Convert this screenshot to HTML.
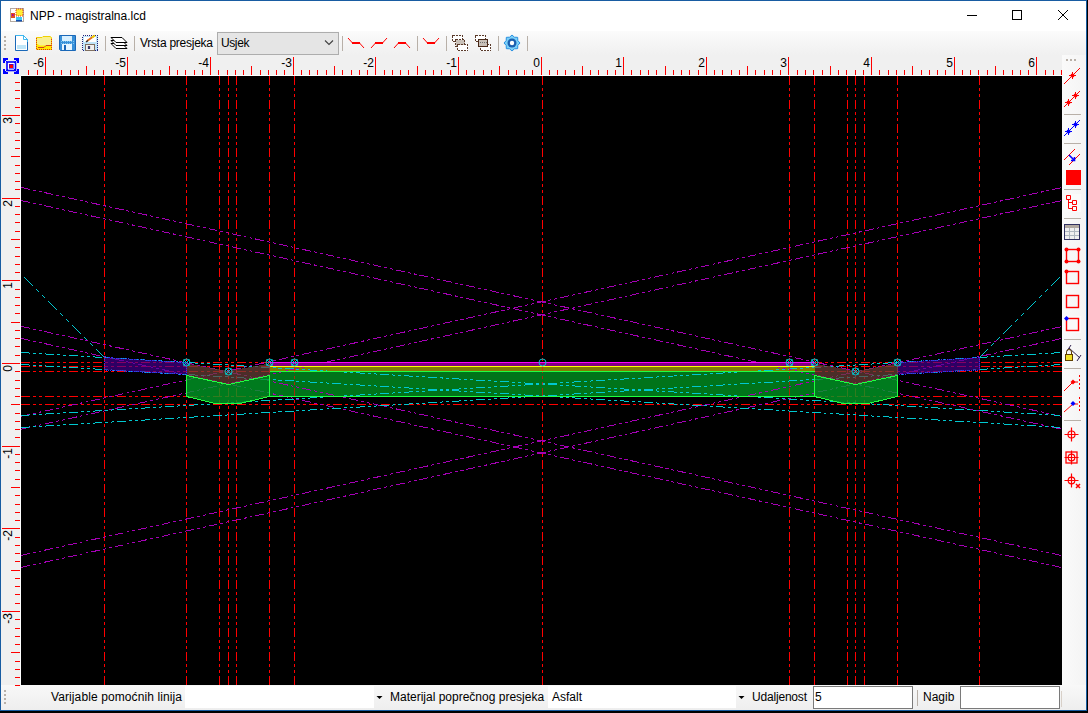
<!DOCTYPE html>
<html><head><meta charset="utf-8"><style>
html,body{margin:0;padding:0;background:#000;width:1088px;height:713px;overflow:hidden;font-family:"Liberation Sans",sans-serif;}
#win{position:absolute;left:0;top:0;width:1085px;height:709px;border:1px solid #185ca2;background:#f0f0f0;overflow:hidden}
.abs{position:absolute}
.t{position:absolute;font-size:12px;color:#000;white-space:nowrap;line-height:14px}
</style></head><body>
<div id="win">
 <div class="abs" style="left:0;top:0;width:1085px;height:30px;background:#fff"></div>
 <div class="abs" style="left:0;top:30px;width:1085px;height:24px;background:linear-gradient(#fbfbfb,#f0f0f0)"></div>
 <div class="abs" style="left:0;top:54px;width:1085px;height:631px;background:#f0f0f0"></div>
 <div class="abs" style="left:1061px;top:54px;width:24px;height:630px;background:linear-gradient(90deg,#fafafa,#f4f4f4)"></div>
 <div class="abs" style="left:0;top:684px;width:1085px;height:25px;background:linear-gradient(#f8f8f8,#eeeeee)"></div>
 <div class="t" style="left:29px;top:7.5px">NPP - magistralna.lcd</div>
 <div class="t" style="left:139px;top:35px;letter-spacing:-0.25px">Vrsta presjeka</div>
 <div class="abs" style="left:216px;top:31px;width:120px;height:21px;border:1px solid #adadad;background:#e5e5e5"></div>
 <div class="t" style="left:220px;top:35px;letter-spacing:-0.4px">Usjek</div>
 <div class="abs" style="left:184px;top:685px;width:189px;height:22px;background:#fff"></div>
 <div class="abs" style="left:547px;top:685px;width:188px;height:22px;background:#fff"></div>
 <div class="t" style="left:50px;top:689px;letter-spacing:0.1px">Varijable pomo&#263;nih linija</div>
 <div class="t" style="left:389px;top:689px">Materijal popre&#269;nog presjeka</div>
 <div class="t" style="left:551px;top:689px">Asfalt</div>
 <div class="t" style="left:751px;top:689px;letter-spacing:-0.19px">Udaljenost</div>
 <div class="abs" style="left:812px;top:685px;width:98px;height:21px;border:1px solid #7a7a7a;background:#fff"></div>
 <div class="t" style="left:814px;top:689px">5</div>
 <div class="t" style="left:922px;top:689px">Nagib</div>
 <div class="abs" style="left:959px;top:685px;width:98px;height:21px;border:1px solid #7a7a7a;background:#fff"></div>
</div>
<svg width="1088" height="713" style="position:absolute;left:0;top:0" font-family="Liberation Sans">
<rect x="20" y="76" width="1" height="609" fill="#fff"/>
<rect x="21" y="75" width="1041" height="1" fill="#fff"/>
<rect x="28" y="70" width="1" height="5" fill="#f00"/>
<rect x="37" y="70" width="1" height="5" fill="#f00"/>
<rect x="45" y="57" width="1" height="18" fill="#f00"/>
<text x="44" y="67" text-anchor="end" font-size="12" fill="#000">-6</text>
<rect x="53" y="70" width="1" height="5" fill="#f00"/>
<rect x="61" y="70" width="1" height="5" fill="#f00"/>
<rect x="70" y="70" width="1" height="5" fill="#f00"/>
<rect x="78" y="70" width="1" height="5" fill="#f00"/>
<rect x="86" y="66" width="1" height="9" fill="#f00"/>
<rect x="94" y="70" width="1" height="5" fill="#f00"/>
<rect x="103" y="70" width="1" height="5" fill="#f00"/>
<rect x="111" y="70" width="1" height="5" fill="#f00"/>
<rect x="119" y="70" width="1" height="5" fill="#f00"/>
<rect x="127" y="57" width="1" height="18" fill="#f00"/>
<text x="126" y="67" text-anchor="end" font-size="12" fill="#000">-5</text>
<rect x="136" y="70" width="1" height="5" fill="#f00"/>
<rect x="144" y="70" width="1" height="5" fill="#f00"/>
<rect x="152" y="70" width="1" height="5" fill="#f00"/>
<rect x="160" y="70" width="1" height="5" fill="#f00"/>
<rect x="169" y="66" width="1" height="9" fill="#f00"/>
<rect x="177" y="70" width="1" height="5" fill="#f00"/>
<rect x="185" y="70" width="1" height="5" fill="#f00"/>
<rect x="194" y="70" width="1" height="5" fill="#f00"/>
<rect x="202" y="70" width="1" height="5" fill="#f00"/>
<rect x="210" y="57" width="1" height="18" fill="#f00"/>
<text x="209" y="67" text-anchor="end" font-size="12" fill="#000">-4</text>
<rect x="218" y="70" width="1" height="5" fill="#f00"/>
<rect x="227" y="70" width="1" height="5" fill="#f00"/>
<rect x="235" y="70" width="1" height="5" fill="#f00"/>
<rect x="243" y="70" width="1" height="5" fill="#f00"/>
<rect x="251" y="66" width="1" height="9" fill="#f00"/>
<rect x="260" y="70" width="1" height="5" fill="#f00"/>
<rect x="268" y="70" width="1" height="5" fill="#f00"/>
<rect x="276" y="70" width="1" height="5" fill="#f00"/>
<rect x="284" y="70" width="1" height="5" fill="#f00"/>
<rect x="293" y="57" width="1" height="18" fill="#f00"/>
<text x="292" y="67" text-anchor="end" font-size="12" fill="#000">-3</text>
<rect x="301" y="70" width="1" height="5" fill="#f00"/>
<rect x="309" y="70" width="1" height="5" fill="#f00"/>
<rect x="317" y="70" width="1" height="5" fill="#f00"/>
<rect x="326" y="70" width="1" height="5" fill="#f00"/>
<rect x="334" y="66" width="1" height="9" fill="#f00"/>
<rect x="342" y="70" width="1" height="5" fill="#f00"/>
<rect x="351" y="70" width="1" height="5" fill="#f00"/>
<rect x="359" y="70" width="1" height="5" fill="#f00"/>
<rect x="367" y="70" width="1" height="5" fill="#f00"/>
<rect x="375" y="57" width="1" height="18" fill="#f00"/>
<text x="374" y="67" text-anchor="end" font-size="12" fill="#000">-2</text>
<rect x="384" y="70" width="1" height="5" fill="#f00"/>
<rect x="392" y="70" width="1" height="5" fill="#f00"/>
<rect x="400" y="70" width="1" height="5" fill="#f00"/>
<rect x="408" y="70" width="1" height="5" fill="#f00"/>
<rect x="417" y="66" width="1" height="9" fill="#f00"/>
<rect x="425" y="70" width="1" height="5" fill="#f00"/>
<rect x="433" y="70" width="1" height="5" fill="#f00"/>
<rect x="441" y="70" width="1" height="5" fill="#f00"/>
<rect x="450" y="70" width="1" height="5" fill="#f00"/>
<rect x="458" y="57" width="1" height="18" fill="#f00"/>
<text x="457" y="67" text-anchor="end" font-size="12" fill="#000">-1</text>
<rect x="466" y="70" width="1" height="5" fill="#f00"/>
<rect x="474" y="70" width="1" height="5" fill="#f00"/>
<rect x="483" y="70" width="1" height="5" fill="#f00"/>
<rect x="491" y="70" width="1" height="5" fill="#f00"/>
<rect x="499" y="66" width="1" height="9" fill="#f00"/>
<rect x="508" y="70" width="1" height="5" fill="#f00"/>
<rect x="516" y="70" width="1" height="5" fill="#f00"/>
<rect x="524" y="70" width="1" height="5" fill="#f00"/>
<rect x="532" y="70" width="1" height="5" fill="#f00"/>
<rect x="541" y="57" width="1" height="18" fill="#f00"/>
<text x="540" y="67" text-anchor="end" font-size="12" fill="#000">0</text>
<rect x="549" y="70" width="1" height="5" fill="#f00"/>
<rect x="557" y="70" width="1" height="5" fill="#f00"/>
<rect x="565" y="70" width="1" height="5" fill="#f00"/>
<rect x="574" y="70" width="1" height="5" fill="#f00"/>
<rect x="582" y="66" width="1" height="9" fill="#f00"/>
<rect x="590" y="70" width="1" height="5" fill="#f00"/>
<rect x="598" y="70" width="1" height="5" fill="#f00"/>
<rect x="607" y="70" width="1" height="5" fill="#f00"/>
<rect x="615" y="70" width="1" height="5" fill="#f00"/>
<rect x="623" y="57" width="1" height="18" fill="#f00"/>
<text x="622" y="67" text-anchor="end" font-size="12" fill="#000">1</text>
<rect x="631" y="70" width="1" height="5" fill="#f00"/>
<rect x="640" y="70" width="1" height="5" fill="#f00"/>
<rect x="648" y="70" width="1" height="5" fill="#f00"/>
<rect x="656" y="70" width="1" height="5" fill="#f00"/>
<rect x="665" y="66" width="1" height="9" fill="#f00"/>
<rect x="673" y="70" width="1" height="5" fill="#f00"/>
<rect x="681" y="70" width="1" height="5" fill="#f00"/>
<rect x="689" y="70" width="1" height="5" fill="#f00"/>
<rect x="698" y="70" width="1" height="5" fill="#f00"/>
<rect x="706" y="57" width="1" height="18" fill="#f00"/>
<text x="705" y="67" text-anchor="end" font-size="12" fill="#000">2</text>
<rect x="714" y="70" width="1" height="5" fill="#f00"/>
<rect x="722" y="70" width="1" height="5" fill="#f00"/>
<rect x="731" y="70" width="1" height="5" fill="#f00"/>
<rect x="739" y="70" width="1" height="5" fill="#f00"/>
<rect x="747" y="66" width="1" height="9" fill="#f00"/>
<rect x="755" y="70" width="1" height="5" fill="#f00"/>
<rect x="764" y="70" width="1" height="5" fill="#f00"/>
<rect x="772" y="70" width="1" height="5" fill="#f00"/>
<rect x="780" y="70" width="1" height="5" fill="#f00"/>
<rect x="788" y="57" width="1" height="18" fill="#f00"/>
<text x="787" y="67" text-anchor="end" font-size="12" fill="#000">3</text>
<rect x="797" y="70" width="1" height="5" fill="#f00"/>
<rect x="805" y="70" width="1" height="5" fill="#f00"/>
<rect x="813" y="70" width="1" height="5" fill="#f00"/>
<rect x="822" y="70" width="1" height="5" fill="#f00"/>
<rect x="830" y="66" width="1" height="9" fill="#f00"/>
<rect x="838" y="70" width="1" height="5" fill="#f00"/>
<rect x="846" y="70" width="1" height="5" fill="#f00"/>
<rect x="855" y="70" width="1" height="5" fill="#f00"/>
<rect x="863" y="70" width="1" height="5" fill="#f00"/>
<rect x="871" y="57" width="1" height="18" fill="#f00"/>
<text x="870" y="67" text-anchor="end" font-size="12" fill="#000">4</text>
<rect x="879" y="70" width="1" height="5" fill="#f00"/>
<rect x="888" y="70" width="1" height="5" fill="#f00"/>
<rect x="896" y="70" width="1" height="5" fill="#f00"/>
<rect x="904" y="70" width="1" height="5" fill="#f00"/>
<rect x="912" y="66" width="1" height="9" fill="#f00"/>
<rect x="921" y="70" width="1" height="5" fill="#f00"/>
<rect x="929" y="70" width="1" height="5" fill="#f00"/>
<rect x="937" y="70" width="1" height="5" fill="#f00"/>
<rect x="945" y="70" width="1" height="5" fill="#f00"/>
<rect x="954" y="57" width="1" height="18" fill="#f00"/>
<text x="953" y="67" text-anchor="end" font-size="12" fill="#000">5</text>
<rect x="962" y="70" width="1" height="5" fill="#f00"/>
<rect x="970" y="70" width="1" height="5" fill="#f00"/>
<rect x="978" y="70" width="1" height="5" fill="#f00"/>
<rect x="987" y="70" width="1" height="5" fill="#f00"/>
<rect x="995" y="66" width="1" height="9" fill="#f00"/>
<rect x="1003" y="70" width="1" height="5" fill="#f00"/>
<rect x="1012" y="70" width="1" height="5" fill="#f00"/>
<rect x="1020" y="70" width="1" height="5" fill="#f00"/>
<rect x="1028" y="70" width="1" height="5" fill="#f00"/>
<rect x="1036" y="57" width="1" height="18" fill="#f00"/>
<text x="1035" y="67" text-anchor="end" font-size="12" fill="#000">6</text>
<rect x="1045" y="70" width="1" height="5" fill="#f00"/>
<rect x="1053" y="70" width="1" height="5" fill="#f00"/>
<rect x="1061" y="70" width="1" height="5" fill="#f00"/>
<rect x="15" y="82" width="5" height="1" fill="#f00"/>
<rect x="15" y="90" width="5" height="1" fill="#f00"/>
<rect x="15" y="98" width="5" height="1" fill="#f00"/>
<rect x="15" y="107" width="5" height="1" fill="#f00"/>
<rect x="2" y="115" width="18" height="1" fill="#f00"/>
<text transform="translate(12,117) rotate(-90)" text-anchor="end" font-size="12" fill="#000">3</text>
<rect x="15" y="123" width="5" height="1" fill="#f00"/>
<rect x="15" y="132" width="5" height="1" fill="#f00"/>
<rect x="15" y="140" width="5" height="1" fill="#f00"/>
<rect x="15" y="148" width="5" height="1" fill="#f00"/>
<rect x="11" y="156" width="9" height="1" fill="#f00"/>
<rect x="15" y="165" width="5" height="1" fill="#f00"/>
<rect x="15" y="173" width="5" height="1" fill="#f00"/>
<rect x="15" y="181" width="5" height="1" fill="#f00"/>
<rect x="15" y="189" width="5" height="1" fill="#f00"/>
<rect x="2" y="198" width="18" height="1" fill="#f00"/>
<text transform="translate(12,200) rotate(-90)" text-anchor="end" font-size="12" fill="#000">2</text>
<rect x="15" y="206" width="5" height="1" fill="#f00"/>
<rect x="15" y="214" width="5" height="1" fill="#f00"/>
<rect x="15" y="222" width="5" height="1" fill="#f00"/>
<rect x="15" y="231" width="5" height="1" fill="#f00"/>
<rect x="11" y="239" width="9" height="1" fill="#f00"/>
<rect x="15" y="247" width="5" height="1" fill="#f00"/>
<rect x="15" y="256" width="5" height="1" fill="#f00"/>
<rect x="15" y="264" width="5" height="1" fill="#f00"/>
<rect x="15" y="272" width="5" height="1" fill="#f00"/>
<rect x="2" y="280" width="18" height="1" fill="#f00"/>
<text transform="translate(12,282) rotate(-90)" text-anchor="end" font-size="12" fill="#000">1</text>
<rect x="15" y="289" width="5" height="1" fill="#f00"/>
<rect x="15" y="297" width="5" height="1" fill="#f00"/>
<rect x="15" y="305" width="5" height="1" fill="#f00"/>
<rect x="15" y="313" width="5" height="1" fill="#f00"/>
<rect x="11" y="322" width="9" height="1" fill="#f00"/>
<rect x="15" y="330" width="5" height="1" fill="#f00"/>
<rect x="15" y="338" width="5" height="1" fill="#f00"/>
<rect x="15" y="346" width="5" height="1" fill="#f00"/>
<rect x="15" y="355" width="5" height="1" fill="#f00"/>
<rect x="2" y="363" width="18" height="1" fill="#f00"/>
<text transform="translate(12,365) rotate(-90)" text-anchor="end" font-size="12" fill="#000">0</text>
<rect x="15" y="371" width="5" height="1" fill="#f00"/>
<rect x="15" y="380" width="5" height="1" fill="#f00"/>
<rect x="15" y="388" width="5" height="1" fill="#f00"/>
<rect x="15" y="396" width="5" height="1" fill="#f00"/>
<rect x="11" y="404" width="9" height="1" fill="#f00"/>
<rect x="15" y="413" width="5" height="1" fill="#f00"/>
<rect x="15" y="421" width="5" height="1" fill="#f00"/>
<rect x="15" y="429" width="5" height="1" fill="#f00"/>
<rect x="15" y="437" width="5" height="1" fill="#f00"/>
<rect x="2" y="446" width="18" height="1" fill="#f00"/>
<text transform="translate(12,448) rotate(-90)" text-anchor="end" font-size="12" fill="#000">-1</text>
<rect x="15" y="454" width="5" height="1" fill="#f00"/>
<rect x="15" y="462" width="5" height="1" fill="#f00"/>
<rect x="15" y="470" width="5" height="1" fill="#f00"/>
<rect x="15" y="479" width="5" height="1" fill="#f00"/>
<rect x="11" y="487" width="9" height="1" fill="#f00"/>
<rect x="15" y="495" width="5" height="1" fill="#f00"/>
<rect x="15" y="504" width="5" height="1" fill="#f00"/>
<rect x="15" y="512" width="5" height="1" fill="#f00"/>
<rect x="15" y="520" width="5" height="1" fill="#f00"/>
<rect x="2" y="528" width="18" height="1" fill="#f00"/>
<text transform="translate(12,530) rotate(-90)" text-anchor="end" font-size="12" fill="#000">-2</text>
<rect x="15" y="537" width="5" height="1" fill="#f00"/>
<rect x="15" y="545" width="5" height="1" fill="#f00"/>
<rect x="15" y="553" width="5" height="1" fill="#f00"/>
<rect x="15" y="561" width="5" height="1" fill="#f00"/>
<rect x="11" y="570" width="9" height="1" fill="#f00"/>
<rect x="15" y="578" width="5" height="1" fill="#f00"/>
<rect x="15" y="586" width="5" height="1" fill="#f00"/>
<rect x="15" y="594" width="5" height="1" fill="#f00"/>
<rect x="15" y="603" width="5" height="1" fill="#f00"/>
<rect x="2" y="611" width="18" height="1" fill="#f00"/>
<text transform="translate(12,613) rotate(-90)" text-anchor="end" font-size="12" fill="#000">-3</text>
<rect x="15" y="619" width="5" height="1" fill="#f00"/>
<rect x="15" y="628" width="5" height="1" fill="#f00"/>
<rect x="15" y="636" width="5" height="1" fill="#f00"/>
<rect x="15" y="644" width="5" height="1" fill="#f00"/>
<rect x="11" y="652" width="9" height="1" fill="#f00"/>
<rect x="15" y="661" width="5" height="1" fill="#f00"/>
<rect x="15" y="669" width="5" height="1" fill="#f00"/>
<rect x="15" y="677" width="5" height="1" fill="#f00"/>
<rect x="15" y="685" width="5" height="1" fill="#f00"/>
</svg>
<svg width="1088" height="713" style="position:absolute;left:0;top:0"><rect x="10.5" y="8.5" width="13" height="13" fill="#fff" stroke="#b4aaa0"/>
<rect x="16" y="9" width="7" height="7" fill="#ffee33" stroke="#e03020" stroke-dasharray="1 1"/>
<rect x="16" y="17" width="6" height="4" fill="#40c8f0"/><rect x="16" y="20" width="6" height="1.5" fill="#1050b0"/>
<rect x="11" y="13" width="4" height="5" fill="#e05020"/><rect x="12" y="14" width="1.5" height="2" fill="#b000a0"/>
<g shape-rendering="crispEdges" fill="#0000ff"><rect x="3" y="58" width="5" height="2"/><rect x="3" y="58" width="2" height="5"/><rect x="14" y="58" width="5" height="2"/><rect x="17" y="58" width="2" height="5"/><rect x="3" y="72" width="5" height="2"/><rect x="3" y="69" width="2" height="5"/><rect x="14" y="72" width="5" height="2"/><rect x="17" y="69" width="2" height="5"/></g>
<rect x="7" y="62" width="8.5" height="8.5" fill="#fff" stroke="#0000ff" stroke-width="1.6"/>
<rect x="9" y="64" width="4" height="4" fill="#ff0000" stroke="#0000ff" stroke-width="0.6" shape-rendering="crispEdges"/>
<path d="M5,60L8,63M17,60L14,63M5,72L8,69M17,72L14,69" stroke="#0000ff" stroke-width="1"/>
<rect x="967" y="15" width="10" height="1" fill="#000"/>
<rect x="1012.5" y="10.5" width="9" height="9" fill="none" stroke="#000"/>
<path d="M1058,10L1068,20M1068,10L1058,20" stroke="#000" stroke-width="1"/>
<rect x="4" y="36" width="2" height="2" fill="#b8b0a8"/>
<rect x="4" y="40" width="2" height="2" fill="#b8b0a8"/>
<rect x="4" y="44" width="2" height="2" fill="#b8b0a8"/>
<rect x="4" y="48" width="2" height="2" fill="#b8b0a8"/>
<path d="M15.5,35.5H23.5L27.5,39.5V50.5H15.5Z" fill="#fff" stroke="#1a68b8"/>
<path d="M15.5,35.5H23.5L27.5,39.5V42" fill="none" stroke="#40b8f0"/>
<path d="M23.5,35.5V39.5H27.5" fill="none" stroke="#40b8f0"/>
<rect x="17" y="45" width="9" height="4" fill="#bfe6f8"/>
<path d="M36.5,37.5H42L43,36.5H50L51.5,37.5V49.5H36.5Z" fill="#f8f090" stroke="#f0d000"/>
<path d="M36.5,49.5V43.5L40,45.5H51.5V49.5Z" fill="#ffea00"/>
<path d="M36.5,38V49.5H51.5V38" fill="none" stroke="#e03a10" stroke-dasharray="1 1" shape-rendering="crispEdges"/>
<path d="M38,47.5H44L46,45.5H51" fill="none" stroke="#d04020"/>
<path d="M59.5,35.5H75.5V50.5H60.5L59.5,49.5Z" fill="#3a90d8" stroke="#1a68b8"/>
<rect x="62" y="36" width="10" height="5" fill="#d8f0ff"/>
<path d="M61,41.5h13M61,43.5h13" stroke="#80c8f0" stroke-dasharray="1 1"/>
<rect x="62" y="44" width="10" height="6" fill="#e8f6ff"/><rect x="64" y="45" width="2" height="5" fill="#1a68b8"/>
<rect x="82.5" y="35.5" width="15" height="15" fill="#bfe4f8" stroke="#20207a" stroke-dasharray="1 1" shape-rendering="crispEdges"/>
<rect x="84" y="37" width="12" height="5" fill="#fff"/>
<path d="M87,41L94,36" stroke="#e07020" stroke-width="2"/><path d="M92,37.5L95,35.5" stroke="#f0d000" stroke-width="2"/><path d="M86,42L88,40.5" stroke="#303030" stroke-width="1.5"/>
<rect x="85.5" y="44.5" width="9" height="6" fill="#f0f0f0" stroke="#807060" stroke-width="1"/><path d="M88,46.5L90,48.5M90,46.5L88,48.5" stroke="#202050" stroke-width="1.3"/>
<rect x="105" y="36" width="1" height="15" fill="#b8b0a8"/>
<rect x="134" y="36" width="1" height="15" fill="#b8b0a8"/>
<rect x="342" y="36" width="1" height="15" fill="#b8b0a8"/>
<rect x="417" y="36" width="1" height="15" fill="#b8b0a8"/>
<rect x="446" y="36" width="1" height="15" fill="#b8b0a8"/>
<rect x="498" y="36" width="1" height="15" fill="#b8b0a8"/>
<rect x="527" y="36" width="1" height="15" fill="#b8b0a8"/>
<path d="M111,43.5H122L127,48.5H116Z" fill="#fff" stroke="#000" stroke-width="1"/>
<path d="M111,40.5H122L127,45.5H116Z" fill="#fff" stroke="#000" stroke-width="1"/>
<path d="M111,37.5H122L127,42.5H116Z" fill="#fff" stroke="#000" stroke-width="1"/>
<path d="M348,38L352.5,43M359.5,43L364,48" stroke="#ff0000"/><rect x="352" y="42" width="8" height="2" fill="#ff0000"/>
<path d="M371,48L375.5,43M382.5,43L387,38" stroke="#ff0000"/><rect x="375" y="42" width="8" height="2" fill="#ff0000"/>
<path d="M394,48L398.5,43M405.5,43L410,48" stroke="#ff0000"/><rect x="398" y="42" width="8" height="2" fill="#ff0000"/>
<path d="M423,38L427.5,43M434.5,43L439,38" stroke="#ff0000"/><rect x="427" y="42" width="8" height="2" fill="#ff0000"/>
<g shape-rendering="crispEdges">
<rect x="452.5" y="35.5" width="10" height="6" fill="#fff" stroke="#5a3a2a" stroke-dasharray="2 1"/>
<rect x="455.5" y="39.5" width="9" height="7" fill="#c8c0b8" stroke="#5a3a2a" stroke-dasharray="2 1"/>
<rect x="457.5" y="44.5" width="10" height="6" fill="#fff" stroke="#5a3a2a" stroke-dasharray="2 1"/>
<rect x="475.5" y="35.5" width="10" height="6" fill="#fff" stroke="#5a3a2a" stroke-dasharray="2 1"/>
<rect x="480.5" y="44.5" width="10" height="6" fill="#fff" stroke="#5a3a2a" stroke-dasharray="2 1"/>
<rect x="478.5" y="39.5" width="9" height="7" fill="#c8c0b8" stroke="#4a2a1a" stroke-width="1.4"/>
<path d="M480,42.5h1M482,42.5h1M484,42.5h1M486,42.5h1" stroke="#707070"/>
</g>
<polygon points="520.00,43.00 517.82,45.41 517.66,48.66 514.41,48.82 512.00,51.00 509.59,48.82 506.34,48.66 506.18,45.41 504.00,43.00 506.18,40.59 506.34,37.34 509.59,37.18 512.00,35.00 514.41,37.18 517.66,37.34 517.82,40.59" fill="#7ad0f8" stroke="#2a90e0" stroke-width="1"/>
<circle cx="512" cy="43" r="4.5" fill="#1a60b0"/><circle cx="512" cy="43" r="2.2" fill="#fff"/>
<path d="M325,40.5L329,44.5L333,40.5" fill="none" stroke="#404040" stroke-width="1.1"/>
<rect x="1066" y="59" width="2" height="2" fill="#b8b0a8"/><rect x="1070" y="59" width="2" height="2" fill="#b8b0a8"/><rect x="1074" y="59" width="2" height="2" fill="#b8b0a8"/>
<path d="M1064,84L1080,68" stroke="#f00"/><path d="M1069.0,75.5H1076.0M1072.5,72.0V79.0" stroke="#f00" stroke-width="1"/><circle cx="1072.5" cy="75.5" r="2" fill="#f00"/>
<path d="M1064,107L1080,91" stroke="#f00"/><path d="M1065.0,102.5H1072.0M1068.5,99.0V106.0" stroke="#f00" stroke-width="1"/><circle cx="1068.5" cy="102.5" r="2" fill="#f00"/><path d="M1072.0,95.5H1079.0M1075.5,92.0V99.0" stroke="#f00" stroke-width="1"/><circle cx="1075.5" cy="95.5" r="2" fill="#f00"/>
<rect x="1064" y="114" width="17" height="1" fill="#b8b0a8"/>
<rect x="1064" y="143" width="17" height="1" fill="#b8b0a8"/>
<rect x="1064" y="189" width="17" height="1" fill="#b8b0a8"/>
<rect x="1064" y="218" width="17" height="1" fill="#b8b0a8"/>
<rect x="1064" y="339" width="17" height="1" fill="#b8b0a8"/>
<rect x="1064" y="368" width="17" height="1" fill="#b8b0a8"/>
<rect x="1064" y="420" width="17" height="1" fill="#b8b0a8"/>
<path d="M1064,136L1080,120" stroke="#00f"/><path d="M1065.0,131.5H1072.0M1068.5,128.0V135.0" stroke="#00f" stroke-width="1"/><circle cx="1068.5" cy="131.5" r="2" fill="#00f"/><path d="M1072.0,124.5H1079.0M1075.5,121.0V128.0" stroke="#00f" stroke-width="1"/><circle cx="1075.5" cy="124.5" r="2" fill="#00f"/>
<path d="M1064,160L1075,149M1069,165L1080,154" stroke="#f00"/><path d="M1069,155L1074.5,160.5M1071,160.5H1074.5V157" fill="none" stroke="#00f" stroke-width="1.6"/>
<rect x="1066" y="170" width="15" height="15" fill="#f00"/>
<rect x="1064" y="194" width="17" height="18" fill="#fafafa"/>
<path d="M1066.5,195.5h4v4h-4zM1072.5,200.5h4v4h-4zM1072.5,206.5h4v4h-4zM1068.5,199.5V208.5H1072.5M1068.5,202.5H1072.5" fill="none" stroke="#f00"/>
<rect x="1064.5" y="224.5" width="15" height="15" fill="#f0f0f0" stroke="#303060"/><rect x="1065" y="225" width="14" height="3" fill="#b0a8a0"/>
<path d="M1065,231.5H1079M1065,235.5H1079M1069.5,228V239M1074.5,228V239" stroke="#b0b8c0"/>
<rect x="1066.5" y="249.5" width="12" height="12" fill="none" stroke="#f00" stroke-width="1.4"/>
<circle cx="1066.5" cy="249.5" r="2" fill="#f00"/>
<circle cx="1078.5" cy="249.5" r="2" fill="#f00"/>
<circle cx="1066.5" cy="261.5" r="2" fill="#f00"/>
<circle cx="1078.5" cy="261.5" r="2" fill="#f00"/>
<rect x="1066.5" y="271.5" width="12" height="12" fill="none" stroke="#f00" stroke-width="1.4"/><circle cx="1066.5" cy="271.5" r="2" fill="#f00"/>
<rect x="1066.5" y="295.5" width="12" height="12" fill="none" stroke="#f00" stroke-width="1.4"/>
<rect x="1064" y="316" width="17" height="17" fill="#fafafa"/>
<rect x="1066.5" y="318.5" width="12" height="12" fill="none" stroke="#f00" stroke-width="1.4"/><path d="M1066.5,316L1069,318.5L1066.5,321L1064,318.5Z" fill="#00f"/>
<path d="M1069,348L1080,358M1067,351L1071,345M1077,361L1081,355" stroke="#302050"/>
<rect x="1065.5" y="354.5" width="7" height="6" fill="#f0e020" stroke="#604000"/><path d="M1066.5,354.5V352a2.5,2.5 0 0 1 5,0V354.5" fill="none" stroke="#604000"/>
<path d="M1064,391L1073,382H1078" fill="none" stroke="#f00"/><path d="M1079.5,375V391" stroke="#f00" stroke-dasharray="2 2"/><path d="M1073,379.5L1075.5,382L1073,384.5L1070.5,382Z" fill="#f00"/>
<path d="M1064,412L1073,404H1078" fill="none" stroke="#f00"/><path d="M1079.5,397V413" stroke="#f00" stroke-dasharray="2 2"/><path d="M1073,401L1075.5,403.5L1073,406L1070.5,403.5Z" fill="#00f"/>
<circle cx="1071.5" cy="434.5" r="3.5" fill="none" stroke="#f00" stroke-width="1.2"/><path d="M1064.5,434.5H1078.5M1071.5,427.5V441.5" stroke="#f00" stroke-width="1.2"/>
<rect x="1066" y="452" width="11" height="11" fill="none" stroke="#f00" stroke-width="1.3"/><circle cx="1071.5" cy="457.5" r="3.3" fill="none" stroke="#f00" stroke-width="1.2"/><path d="M1064.5,457.5H1078.5M1071.5,450.5V464.5" stroke="#f00" stroke-width="1.2"/>
<circle cx="1071.5" cy="480.5" r="3.3" fill="none" stroke="#f00" stroke-width="1.2"/><path d="M1064.5,480.5H1078.5M1071.5,473.5V487.5" stroke="#f00" stroke-width="1.2"/><path d="M1076,484L1080,488M1080,484L1076,488" stroke="#f00" stroke-width="1.5"/>
<rect x="4" y="690" width="2" height="2" fill="#b8b0a8"/>
<rect x="4" y="694" width="2" height="2" fill="#b8b0a8"/>
<rect x="4" y="698" width="2" height="2" fill="#b8b0a8"/>
<rect x="4" y="702" width="2" height="2" fill="#b8b0a8"/>
<path d="M376.5,696H382.5L379.5,699Z" fill="#000"/>
<path d="M738.5,696H744.5L741.5,699Z" fill="#000"/>
<rect x="917" y="690" width="1" height="16" fill="#b8b0a8"/>
<rect x="1061" y="691" width="1" height="16" fill="#d8d0c8"/></svg>
<svg width="1088" height="713" style="position:absolute;left:0;top:0" shape-rendering="crispEdges">
<defs><clipPath id="pv"><rect x="270" y="367" width="544" height="30"/></clipPath><clipPath id="cv"><rect x="21" y="76" width="1041" height="609"/></clipPath></defs>
<rect x="21" y="76" width="1041" height="609" fill="#000"/>
<g clip-path="url(#cv)">
<line x1="104.5" y1="76" x2="104.5" y2="685" stroke="#ff0000" stroke-dasharray="9 3 3 3 3 3"/>
<line x1="186.5" y1="76" x2="186.5" y2="685" stroke="#ff0000" stroke-dasharray="9 3 3 3 3 3"/>
<line x1="219.5" y1="76" x2="219.5" y2="685" stroke="#ff0000" stroke-dasharray="9 3 3 3 3 3"/>
<line x1="228.5" y1="76" x2="228.5" y2="685" stroke="#ff0000" stroke-dasharray="9 3 3 3 3 3"/>
<line x1="236.5" y1="76" x2="236.5" y2="685" stroke="#ff0000" stroke-dasharray="9 3 3 3 3 3"/>
<line x1="269.5" y1="76" x2="269.5" y2="685" stroke="#ff0000" stroke-dasharray="9 3 3 3 3 3"/>
<line x1="294.5" y1="76" x2="294.5" y2="685" stroke="#ff0000" stroke-dasharray="9 3 3 3 3 3"/>
<line x1="542.5" y1="76" x2="542.5" y2="685" stroke="#ff0000" stroke-dasharray="9 3 3 3 3 3"/>
<line x1="789.5" y1="76" x2="789.5" y2="685" stroke="#ff0000" stroke-dasharray="9 3 3 3 3 3"/>
<line x1="814.5" y1="76" x2="814.5" y2="685" stroke="#ff0000" stroke-dasharray="9 3 3 3 3 3"/>
<line x1="847.5" y1="76" x2="847.5" y2="685" stroke="#ff0000" stroke-dasharray="9 3 3 3 3 3"/>
<line x1="855.5" y1="76" x2="855.5" y2="685" stroke="#ff0000" stroke-dasharray="9 3 3 3 3 3"/>
<line x1="864.5" y1="76" x2="864.5" y2="685" stroke="#ff0000" stroke-dasharray="9 3 3 3 3 3"/>
<line x1="897.5" y1="76" x2="897.5" y2="685" stroke="#ff0000" stroke-dasharray="9 3 3 3 3 3"/>
<line x1="979.5" y1="76" x2="979.5" y2="685" stroke="#ff0000" stroke-dasharray="9 3 3 3 3 3"/>
<line x1="21" y1="362.5" x2="1062" y2="362.5" stroke="#ff0000" stroke-dasharray="9 3 3 3 3 3"/>
<line x1="21" y1="366.5" x2="1062" y2="366.5" stroke="#ff0000" stroke-dasharray="9 3 3 3 3 3"/>
<line x1="21" y1="371.5" x2="1062" y2="371.5" stroke="#ff0000" stroke-dasharray="9 3 3 3 3 3"/>
<line x1="21" y1="396.5" x2="1062" y2="396.5" stroke="#ff0000" stroke-dasharray="9 3 3 3 3 3"/>
<line x1="21" y1="404.5" x2="1062" y2="404.5" stroke="#ff0000" stroke-dasharray="9 3 3 3 3 3"/>
<line x1="21" y1="187.4" x2="1062" y2="416.5" stroke="#a500b5" stroke-dasharray="9 3 3 3 3 3"/>
<line x1="21" y1="200.5" x2="1062" y2="429.3" stroke="#a500b5" stroke-dasharray="9 3 3 3 3 3"/>
<line x1="21" y1="416.3" x2="1062" y2="187.5" stroke="#a500b5" stroke-dasharray="9 3 3 3 3 3"/>
<line x1="21" y1="429.2" x2="1062" y2="200.5" stroke="#a500b5" stroke-dasharray="9 3 3 3 3 3"/>
<line x1="21" y1="326.3" x2="1062" y2="555.6" stroke="#a500b5" stroke-dasharray="9 3 3 3 3 3"/>
<line x1="21" y1="338.4" x2="1062" y2="567.6" stroke="#a500b5" stroke-dasharray="9 3 3 3 3 3"/>
<line x1="21" y1="555.4" x2="1062" y2="326.5" stroke="#a500b5" stroke-dasharray="9 3 3 3 3 3"/>
<line x1="21" y1="567.4" x2="1062" y2="338.4" stroke="#a500b5" stroke-dasharray="9 3 3 3 3 3"/>
<line x1="21" y1="352.5" x2="1062" y2="415.5" stroke="#00c8d0" stroke-dasharray="9 3 3 3 3 3"/>
<line x1="21" y1="364.5" x2="1062" y2="427.5" stroke="#00c8d0" stroke-dasharray="9 3 3 3 3 3"/>
<line x1="21" y1="415.5" x2="1062" y2="352.5" stroke="#00c8d0" stroke-dasharray="9 3 3 3 3 3"/>
<line x1="21" y1="427.5" x2="1062" y2="364.5" stroke="#00c8d0" stroke-dasharray="9 3 3 3 3 3"/>
<line x1="24.5" y1="277.5" x2="104.5" y2="357.5" stroke="#00c8d0" stroke-dasharray="12.73 4.24 4.24 4.24 4.24 4.24"/>
<line x1="1059.5" y1="277.5" x2="979.5" y2="357.5" stroke="#00c8d0" stroke-dasharray="12.73 4.24 4.24 4.24 4.24 4.24"/>
<polygon points="104.5,357.5 186.5,362.5 186.5,374.5 104.5,370" fill="#460098" fill-opacity="0.65" stroke="#3030ff" stroke-dasharray="1 1"/>
<polygon points="979.5,357.5 897.5,362.5 897.5,374.5 979.5,370" fill="#460098" fill-opacity="0.65" stroke="#3030ff" stroke-dasharray="1 1"/>
<polygon points="186.5,363.5 228.5,371 269.5,363.5 269.5,375.5 228.5,384.5 186.5,375.5" fill="#683e37" fill-opacity="0.72"/>
<polygon points="814.5,363.5 855.5,371 897.5,363.5 897.5,375.5 855.5,384.5 814.5,375.5" fill="#683e37" fill-opacity="0.72"/>
<polygon points="186.5,375.5 228.5,384.5 269.5,375.5 269.5,396.5 240,403.5 215,403.5 186.5,396.5" fill="#009a26" fill-opacity="0.8" stroke="#20ff40" stroke-width="1"/>
<polygon points="814.5,375.5 855.5,384.5 897.5,375.5 897.5,396.5 868,403.5 843,403.5 814.5,396.5" fill="#009a26" fill-opacity="0.8" stroke="#20ff40" stroke-width="1"/>
<rect x="269.5" y="363" width="545" height="3" fill="#800080"/>
<rect x="269.5" y="367" width="545" height="4" fill="#807d00"/>
<rect x="269.5" y="372" width="545" height="24" fill="#007d1c" fill-opacity="0.93"/>
<g clip-path="url(#pv)"><line x1="21" y1="187.4" x2="1062" y2="416.5" stroke="#a500b5" stroke-dasharray="9 3 3 3 3 3"/>
<line x1="21" y1="200.5" x2="1062" y2="429.3" stroke="#a500b5" stroke-dasharray="9 3 3 3 3 3"/>
<line x1="21" y1="416.3" x2="1062" y2="187.5" stroke="#a500b5" stroke-dasharray="9 3 3 3 3 3"/>
<line x1="21" y1="429.2" x2="1062" y2="200.5" stroke="#a500b5" stroke-dasharray="9 3 3 3 3 3"/>
<line x1="21" y1="326.3" x2="1062" y2="555.6" stroke="#a500b5" stroke-dasharray="9 3 3 3 3 3"/>
<line x1="21" y1="338.4" x2="1062" y2="567.6" stroke="#a500b5" stroke-dasharray="9 3 3 3 3 3"/>
<line x1="21" y1="555.4" x2="1062" y2="326.5" stroke="#a500b5" stroke-dasharray="9 3 3 3 3 3"/>
<line x1="21" y1="567.4" x2="1062" y2="338.4" stroke="#a500b5" stroke-dasharray="9 3 3 3 3 3"/>
<line x1="21" y1="352.5" x2="1062" y2="415.5" stroke="#00c8d0" stroke-dasharray="9 3 3 3 3 3"/>
<line x1="21" y1="364.5" x2="1062" y2="427.5" stroke="#00c8d0" stroke-dasharray="9 3 3 3 3 3"/>
<line x1="21" y1="415.5" x2="1062" y2="352.5" stroke="#00c8d0" stroke-dasharray="9 3 3 3 3 3"/>
<line x1="21" y1="427.5" x2="1062" y2="364.5" stroke="#00c8d0" stroke-dasharray="9 3 3 3 3 3"/>
<line x1="24.5" y1="277.5" x2="104.5" y2="357.5" stroke="#00c8d0" stroke-dasharray="12.73 4.24 4.24 4.24 4.24 4.24"/>
<line x1="1059.5" y1="277.5" x2="979.5" y2="357.5" stroke="#00c8d0" stroke-dasharray="12.73 4.24 4.24 4.24 4.24 4.24"/><g opacity="0.6"><line x1="104.5" y1="76" x2="104.5" y2="685" stroke="#ff0000" stroke-dasharray="9 3 3 3 3 3"/>
<line x1="186.5" y1="76" x2="186.5" y2="685" stroke="#ff0000" stroke-dasharray="9 3 3 3 3 3"/>
<line x1="219.5" y1="76" x2="219.5" y2="685" stroke="#ff0000" stroke-dasharray="9 3 3 3 3 3"/>
<line x1="228.5" y1="76" x2="228.5" y2="685" stroke="#ff0000" stroke-dasharray="9 3 3 3 3 3"/>
<line x1="236.5" y1="76" x2="236.5" y2="685" stroke="#ff0000" stroke-dasharray="9 3 3 3 3 3"/>
<line x1="269.5" y1="76" x2="269.5" y2="685" stroke="#ff0000" stroke-dasharray="9 3 3 3 3 3"/>
<line x1="294.5" y1="76" x2="294.5" y2="685" stroke="#ff0000" stroke-dasharray="9 3 3 3 3 3"/>
<line x1="542.5" y1="76" x2="542.5" y2="685" stroke="#ff0000" stroke-dasharray="9 3 3 3 3 3"/>
<line x1="789.5" y1="76" x2="789.5" y2="685" stroke="#ff0000" stroke-dasharray="9 3 3 3 3 3"/>
<line x1="814.5" y1="76" x2="814.5" y2="685" stroke="#ff0000" stroke-dasharray="9 3 3 3 3 3"/>
<line x1="847.5" y1="76" x2="847.5" y2="685" stroke="#ff0000" stroke-dasharray="9 3 3 3 3 3"/>
<line x1="855.5" y1="76" x2="855.5" y2="685" stroke="#ff0000" stroke-dasharray="9 3 3 3 3 3"/>
<line x1="864.5" y1="76" x2="864.5" y2="685" stroke="#ff0000" stroke-dasharray="9 3 3 3 3 3"/>
<line x1="897.5" y1="76" x2="897.5" y2="685" stroke="#ff0000" stroke-dasharray="9 3 3 3 3 3"/>
<line x1="979.5" y1="76" x2="979.5" y2="685" stroke="#ff0000" stroke-dasharray="9 3 3 3 3 3"/></g></g>
<rect x="269.5" y="362" width="545" height="1" fill="#ff00ff"/>
<rect x="269.5" y="366" width="545" height="1" fill="#ffff00"/>
<rect x="269.5" y="371" width="545" height="1" fill="#20ff40"/>
<rect x="269.5" y="396" width="545" height="1" fill="#20ff40"/>
<polyline points="186.5,375.5 228.5,384.5 269.5,375.5 269.5,396.5 240,403.5 215,403.5 186.5,396.5 186.5,375.5" fill="none" stroke="#20ff40"/>
<polyline points="814.5,375.5 855.5,384.5 897.5,375.5 897.5,396.5 868,403.5 843,403.5 814.5,396.5 814.5,375.5" fill="none" stroke="#20ff40"/>
<g shape-rendering="geometricPrecision"><circle cx="186.5" cy="362.5" r="3.5" fill="none" stroke="#00c8d0" stroke-width="1"/><path d="M183.5,359.5L189.5,365.5M189.5,359.5L183.5,365.5" stroke="#00c8d0"/>
<circle cx="228.5" cy="371.5" r="3.5" fill="none" stroke="#00c8d0" stroke-width="1"/><path d="M225.5,368.5L231.5,374.5M231.5,368.5L225.5,374.5" stroke="#00c8d0"/>
<circle cx="269.5" cy="362.5" r="3.5" fill="none" stroke="#00c8d0" stroke-width="1"/><path d="M266.5,359.5L272.5,365.5M272.5,359.5L266.5,365.5" stroke="#00c8d0"/>
<circle cx="294.5" cy="362.5" r="3.5" fill="none" stroke="#00c8d0" stroke-width="1"/><path d="M291.5,359.5L297.5,365.5M297.5,359.5L291.5,365.5" stroke="#00c8d0"/>
<circle cx="789.5" cy="362.5" r="3.5" fill="none" stroke="#00c8d0" stroke-width="1"/><path d="M786.5,359.5L792.5,365.5M792.5,359.5L786.5,365.5" stroke="#00c8d0"/>
<circle cx="814.5" cy="362.5" r="3.5" fill="none" stroke="#00c8d0" stroke-width="1"/><path d="M811.5,359.5L817.5,365.5M817.5,359.5L811.5,365.5" stroke="#00c8d0"/>
<circle cx="855.5" cy="371.5" r="3.5" fill="none" stroke="#00c8d0" stroke-width="1"/><path d="M852.5,368.5L858.5,374.5M858.5,368.5L852.5,374.5" stroke="#00c8d0"/>
<circle cx="897.5" cy="362.5" r="3.5" fill="none" stroke="#00c8d0" stroke-width="1"/><path d="M894.5,359.5L900.5,365.5M900.5,359.5L894.5,365.5" stroke="#00c8d0"/>
<circle cx="542.5" cy="362.5" r="3.5" fill="none" stroke="#00c8d0"/></g>
</g></svg>
</body></html>
